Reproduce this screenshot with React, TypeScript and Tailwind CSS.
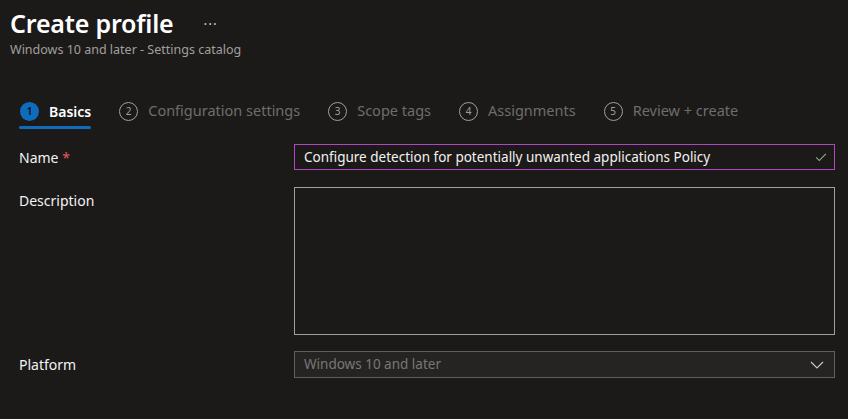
import React from "react";

const font = { fontFamily: '"Noto Sans", "Open Sans", sans-serif' };

function Step({ n, label, active }: { n: number; label: string; active?: boolean }) {
  return (
    <div className="relative flex items-center h-[40px]">
      {active ? (
        <div className="w-[19px] h-[19px] rounded-full bg-[#0f6cbd] flex items-center justify-center text-[10px] text-[#111] font-semibold">
          {n}
        </div>
      ) : (
        <div className="w-[19px] h-[19px] rounded-full border border-[#a19f9d] flex items-center justify-center text-[10px] text-[#a19f9d]">
          {n}
        </div>
      )}
      <span className={active ? "ml-[10px] text-[14px] font-semibold text-white" : "ml-[10px] text-[14.5px] text-[#6f6d6b]"}>
        {label}
      </span>
      {active && <div className="absolute left-[-1px] right-0 bottom-[2px] h-[3px] bg-[#0f6cbd] rounded-sm" />}
    </div>
  );
}

export default function App() {
  return (
    <div style={font} className="w-[848px] h-[419px] bg-[#1b1a19] text-[#f3f2f1] overflow-hidden">
      <div className="pl-[10px] pt-[6px]">
        <div className="flex items-center">
          <h1 className="text-[25px] font-semibold leading-[34px] text-white tracking-[-0.2px]">Create profile</h1>
          <span className="ml-[30px] text-[14px] text-[#c8c6c4] tracking-[1px]">···</span>
        </div>
        <div className="text-[12.5px] text-[#a19f9d] leading-[18px] mt-[1px]">Windows 10 and later - Settings catalog</div>
      </div>

      <div className="flex items-center pl-[20px] mt-[32px] gap-[28px]">
        <Step n={1} label="Basics" active />
        <Step n={2} label="Configuration settings" />
        <Step n={3} label="Scope tags" />
        <Step n={4} label="Assignments" />
        <Step n={5} label="Review + create" />
      </div>

      <div className="mt-[13px] pl-[19px] pr-[13px]">
        <div className="flex items-center">
          <div className="w-[275px] text-[14px] text-[#f3f2f1]">
            Name <span className="text-[#e35b5b]">*</span>
          </div>
          <div className="flex-1 h-[26px] border border-[#b146c2] bg-[#1b1a19] flex items-center pl-[9px] pr-[6px]">
            <span className="flex-1 text-[13.5px] text-[#f3f2f1] truncate">Configure detection for potentially unwanted applications Policy</span>
            <svg width="14" height="14" viewBox="0 0 16 16" fill="none">
              <path d="M2.5 8.5l3.5 3.5 7.5-7.5" stroke="#8fb58f" strokeWidth="1.2" />
            </svg>
          </div>
        </div>

        <div className="flex mt-[17px]">
          <div className="w-[275px] text-[14px] text-[#f3f2f1] pt-[3px]">Description</div>
          <div className="flex-1 h-[148px] border border-[#a19f9d] bg-[#1b1a19]" />
        </div>

        <div className="flex items-center mt-[16px]">
          <div className="w-[275px] text-[14px] text-[#f3f2f1]">Platform</div>
          <div className="flex-1 h-[27px] border border-[#605e5c] bg-[#252423] flex items-center pl-[9px] pr-[9px]">
            <span className="flex-1 text-[13.5px] text-[#797775]">Windows 10 and later</span>
            <svg width="16" height="16" viewBox="0 0 16 16" fill="none">
              <path d="M2 5l6 6 6-6" stroke="#c8c6c4" strokeWidth="1.2" />
            </svg>
          </div>
        </div>
      </div>
    </div>
  );
}
